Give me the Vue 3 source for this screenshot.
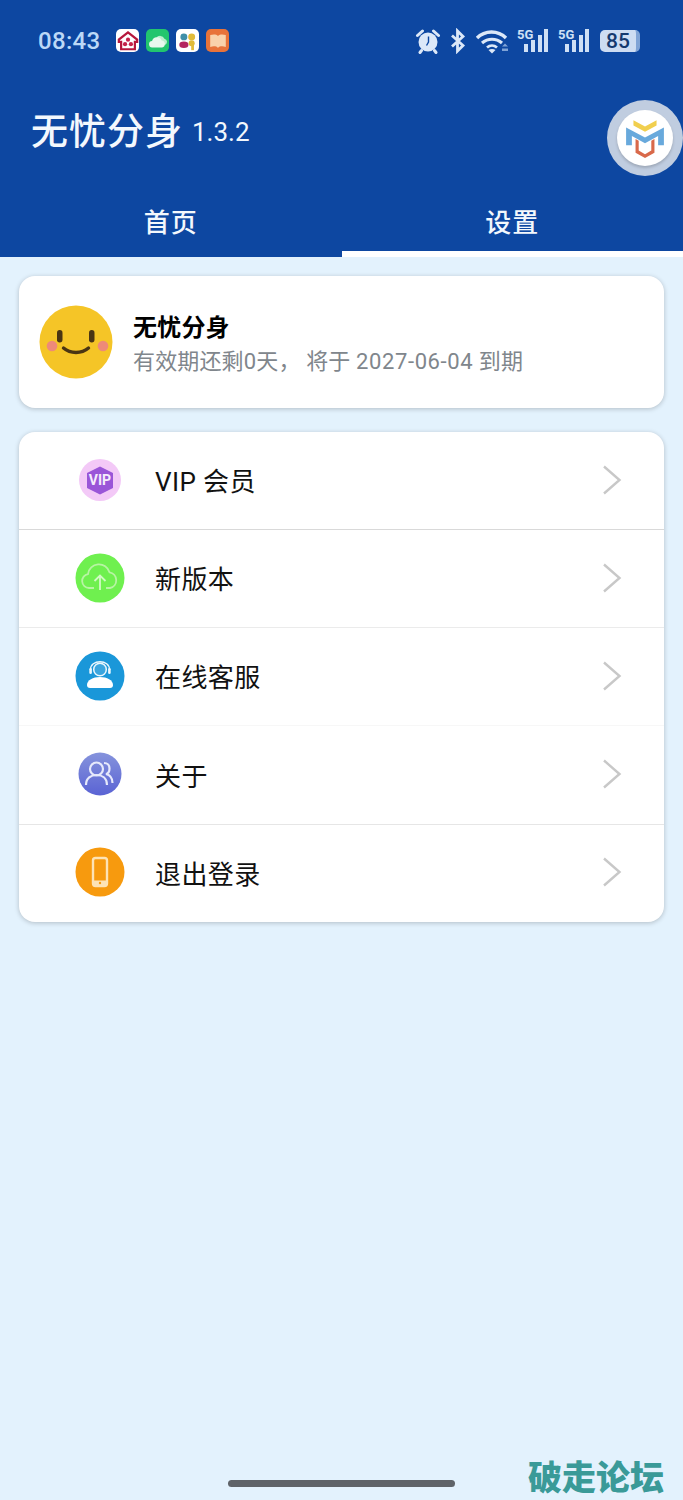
<template>
  <div class="page">
    <header class="appbar">
      <div class="status">
        <span class="time">08:43</span>
        <div class="notif">
          <span class="nicon white">
            <svg viewBox="0 0 24 24" width="22" height="22"><path d="M12 2.500 2 10.500v2.500h2.500v8h15v-8H22v-2.500z" fill="none" stroke="#b5173c" stroke-width="2.400"/><circle cx="12" cy="10.500" r="2.300" fill="#c4224a"/><circle cx="8.800" cy="15.500" r="2.300" fill="#c4224a"/><circle cx="15.200" cy="15.500" r="2.300" fill="#c4224a"/></svg>
          </span>
          <span class="nicon green">
            <svg viewBox="0 0 24 24" width="22" height="22"><path d="M10 9a5 5 0 0 1 9 .5 3.500 3.500 0 0 1 1 6.500h-3z" fill="#bdeed0"/><path d="M6 19a3.500 3.500 0 0 1-.5-7 5.500 5.500 0 0 1 10.500-.5 3.800 3.800 0 0 1 .5 7.500z" fill="#e8f8ee"/></svg>
          </span>
          <span class="nicon white">
            <svg viewBox="0 0 24 24" width="22" height="22"><circle cx="7.500" cy="7.500" r="3.800" fill="#3f8fa8"/><circle cx="16" cy="7.500" r="3.800" fill="#e0bb3a"/><ellipse cx="7.500" cy="16" rx="5" ry="3.500" fill="#b3245f"/><circle cx="16" cy="14.500" r="3.300" fill="#e0bb3a"/><rect x="15.500" y="15" width="3" height="7" fill="#e0bb3a"/></svg>
          </span>
          <span class="nicon orange">
            <svg viewBox="0 0 24 24" width="22" height="22"><path d="M3.500 5.500c3.500-1 6.500-1 8.500 1 2-2 5-2 8.500-1v13c-3.500-1-6.500-1-8.500 1-2-2-5-2-8.500-1z" fill="#f9d2ab"/></svg>
          </span>
        </div>
        <div class="sys">
          <svg class="alarm" viewBox="0 0 26 26" width="26" height="26">
            <circle cx="13" cy="14" r="9.500" fill="#dce8f8"/>
            <path d="M2.500 7.500 7.500 3M23.500 7.500 18.500 3M6.500 22.500 5 24.500M19.500 22.500 21 24.500" stroke="#dce8f8" stroke-width="3" stroke-linecap="round"/>
            <path d="M13.500 8.500v5.500l-2 3.500" stroke="#0d47a1" stroke-width="1.400" fill="none"/>
          </svg>
          <svg class="bt" viewBox="0 0 18 26" width="18" height="26">
            <path d="M3 7.500 14 17.500 8.500 23V3L14 8.500 3 18.500" fill="none" stroke="#dce8f8" stroke-width="2.800"/>
          </svg>
          <svg class="wifi" viewBox="0 0 34 26" width="34" height="26">
            <path d="M2 10C10 2 23 2 31 10" fill="none" stroke="#dce8f8" stroke-width="3.400"/>
            <path d="M7 15c6-5 14-5 20 0" fill="none" stroke="#dce8f8" stroke-width="3.200"/>
            <path d="M12 19.500c3-2.500 7-2.500 10 0" fill="none" stroke="#dce8f8" stroke-width="2.800"/>
            <path d="M17 25.500l-3.500-3.500c2-1.500 5-1.500 7 0z" fill="#dce8f8"/>
            <path d="M27 18.500l3-3 3 3zM27 20.500h6v2.500h-6z" fill="#7fa3d6"/>
          </svg>
          <svg class="sig" viewBox="0 0 32 26" width="32" height="26">
            <text x="0" y="11" class="fiveg">5G</text>
            <rect x="7" y="16" width="4" height="8" fill="#cfe0f5"/>
            <rect x="14" y="12" width="4" height="12" fill="#cfe0f5"/>
            <rect x="21" y="7" width="4" height="17" fill="#cfe0f5"/>
            <rect x="27" y="1" width="4" height="23" fill="#cfe0f5"/>
          </svg>
          <svg class="sig" viewBox="0 0 32 26" width="32" height="26">
            <text x="0" y="11" class="fiveg">5G</text>
            <rect x="7" y="16" width="4" height="8" fill="#cfe0f5"/>
            <rect x="14" y="12" width="4" height="12" fill="#cfe0f5"/>
            <rect x="21" y="7" width="4" height="17" fill="#cfe0f5"/>
            <rect x="27" y="1" width="4" height="23" fill="#cfe0f5"/>
          </svg>
          <div class="battery"><span>85</span></div>
        </div>
      </div>
      <div class="titlerow">
        <span class="title">无忧分身</span>
        <span class="version">1.3.2</span>
      </div>
      <nav class="tabs">
        <div v-for="(t, i) in tabs" :key="t" class="tab" :class="{ on: i === 1 }">{{ t }}</div>
      </nav>
    </header>

    <div class="floatlogo">
      <div class="logoinner">
        <svg viewBox="0 0 40 40" width="42" height="42">
          <path d="M9 3 20 9 31 3v5L20 14 9 8z" fill="#f1cf4e"/>
          <path d="M2 10 20 19.500 38 10v17h-5.500V18L20 25 7.500 18v9H2z" fill="#68a9dc"/>
          <path d="M11 21v13l9 5 9-5V21l-3 1.700V32l-6 3.500L14 32v-9.300z" fill="#d9694a"/>
        </svg>
      </div>
    </div>

    <main class="content">
      <section class="card profile">
        <svg class="smile" viewBox="0 0 74 74" width="74" height="74">
          <circle cx="37" cy="37" r="36.500" fill="#f5c527"/>
          <circle cx="13" cy="41" r="5.300" fill="#ee8a78"/>
          <circle cx="64" cy="41" r="5.300" fill="#ee8a78"/>
          <rect x="18" y="25" width="5.500" height="12.500" rx="2.700" fill="#4a3513"/>
          <rect x="50" y="25" width="5.500" height="12.500" rx="2.700" fill="#4a3513"/>
          <path d="M24.500 43c7 6 18 6 25 0" fill="none" stroke="#4a3513" stroke-width="3.400" stroke-linecap="round"/>
        </svg>
        <div class="pinfo">
          <div class="pname">无忧分身</div>
          <div class="pdesc">有效期还剩0天， 将于 <span class="date">2027-06-04</span> 到期</div>
        </div>
      </section>

      <section class="card list">
        <div v-for="(row, i) in rows" :key="row.label" class="row" :style="{ borderBottomColor: row.line }">
          <span class="rowicon">
            <svg v-if="i === 0" viewBox="0 0 50 50" width="50" height="50">
              <circle cx="25" cy="25" r="21" fill="#f3c9f7"/>
              <path d="M25 11.500 38 18V33L25 39.500 12 33V18z" fill="#9a55d8"/>
              <text x="25" y="30" class="viptext">VIP</text>
            </svg>
            <svg v-else-if="i === 1" viewBox="0 0 50 50" width="50" height="50">
              <circle cx="25" cy="25" r="24.500" fill="#6ff04f"/>
              <path d="M19 35h-5a7 7 0 0 1-1-13.900 11 11 0 0 1 21.500-1.800A8 8 0 0 1 35 35h-4" fill="none" stroke="#b8f4a4" stroke-width="1.800"/>
              <path d="M25 37V22.500M19.500 28 25 22.500l5.500 5.500" fill="none" stroke="#d2f9c4" stroke-width="1.800"/>
            </svg>
            <svg v-else-if="i === 2" viewBox="0 0 50 50" width="50" height="50">
              <circle cx="25" cy="25" r="24.500" fill="#1a97d9"/>
              <circle cx="25" cy="18.500" r="6.300" fill="#3aa5de" stroke="#eaf6fd" stroke-width="1.500"/>
              <path d="M15.500 19c-.5-11 19.500-11 19 0" fill="none" stroke="#eaf6fd" stroke-width="1.400"/>
              <rect x="14.300" y="17" width="2.600" height="6" rx="1.300" fill="#eaf6fd"/>
              <rect x="33.100" y="17" width="2.600" height="6" rx="1.300" fill="#eaf6fd"/>
              <path d="M12 34c0-5 6-8 13-8s13 3 13 8c0 2-1 3-3 3H15c-2 0-3-1-3-3z" fill="#fff"/>
            </svg>
            <svg v-else-if="i === 3" viewBox="0 0 50 50" width="50" height="50">
              <defs><linearGradient id="ab" x1="0" y1="0" x2="0" y2="1"><stop offset="0" stop-color="#8593dc"/><stop offset="1" stop-color="#5a63d4"/></linearGradient></defs>
              <circle cx="25" cy="25" r="21.500" fill="url(#ab)"/>
              <circle cx="21.500" cy="20" r="6.500" fill="none" stroke="#e6e9fb" stroke-width="2.200"/>
              <path d="M11 36c0-7 5-10 10.500-10S32 29 32 36" fill="none" stroke="#e6e9fb" stroke-width="2.200"/>
              <path d="M29 14c4 0 5.500 3 5.500 5.500 0 3-1.500 5-3.500 5.500 4 1 6.500 4 6.500 9" fill="none" stroke="#e6e9fb" stroke-width="2.200"/>
            </svg>
            <svg v-else viewBox="0 0 50 50" width="50" height="50">
              <circle cx="25" cy="25" r="24.500" fill="#f79a0e"/>
              <rect x="18" y="11" width="14" height="28" rx="2.500" fill="#f79a0e" stroke="#fde3b5" stroke-width="2.400"/>
              <rect x="18" y="33.500" width="14" height="5" fill="#fde3b5"/>
              <circle cx="25" cy="36" r="1.200" fill="#f79a0e"/>
            </svg>
          </span>
          <span class="rowlabel">{{ row.label }}</span>
          <svg class="chev" viewBox="0 0 20 30" width="20" height="30"><path d="M2 1.500 17.500 15 2 28.500" fill="none" stroke="#c8c8c8" stroke-width="2.400"/></svg>
        </div>
      </section>
    </main>

    <div class="homebar"></div>
    <div class="mark">破走论坛</div>
  </div>
</template>

<script setup>
const tabs = ['首页', '设置']

// separators are not equally strong in the screenshot
const rows = [
  { label: 'VIP 会员', line: '#d9d9d9' },
  { label: '新版本', line: '#ebebeb' },
  { label: '在线客服', line: '#f7f7f7' },
  { label: '关于', line: '#e6e6e6' },
  { label: '退出登录', line: 'transparent' },
]
</script>

<style>
html, body {
  margin: 0;
  background: #e3f2fd;
}
</style>

<style scoped>
.page {
  position: relative;
  width: 683px;
  height: 1500px;
  overflow: hidden;
  background: #e3f2fd;
  font-family: Roboto, "Noto Sans CJK SC", sans-serif;
}

.appbar {
  background: #0d47a1;
  height: 257px;
  display: flex;
  flex-direction: column;
}

.status {
  height: 81px;
  box-sizing: border-box;
  padding: 0 43px 0 38px;
  display: flex;
  align-items: center;
  color: #bcd9f7;
}
.time {
  font-family: Roboto, sans-serif;
  font-size: 24px;
  font-weight: 500;
  letter-spacing: 0.3px;
  width: 78px;
}
.notif {
  display: flex;
  gap: 7px;
}
.nicon {
  width: 23px;
  height: 23px;
  border-radius: 5px;
  display: flex;
  align-items: center;
  justify-content: center;
}
.nicon.white { background: #fff; }
.nicon.green { background: #22c56e; }
.nicon.orange { background: #e8733a; }

.sys {
  margin-left: auto;
  display: flex;
  align-items: center;
}
.bt { margin-left: 8px; }
.wifi { margin-left: 8px; }
.sig { margin-left: 8px; }
.sig + .sig { margin-left: 9px; }
.fiveg {
  font-family: Roboto, sans-serif;
  font-size: 13px;
  font-weight: 700;
  fill: #cfe0f5;
}
.battery {
  margin-left: 10px;
  width: 36px;
  height: 22px;
  border-radius: 5px;
  background: #cddcf2;
  border-right: 4px solid #7fa3d6;
  color: #14396f;
  font-family: Roboto, sans-serif;
  font-size: 21px;
  font-weight: 500;
  display: flex;
  align-items: center;
  justify-content: center;
}

.titlerow {
  height: 100px;
  box-sizing: border-box;
  padding: 0 0 4px 31px;
  display: flex;
  align-items: center;
  color: #f3f8fd;
}
.title {
  font-size: 37px;
  font-weight: 500;
  letter-spacing: 1px;
}
.version {
  font-size: 26px;
  margin-left: 9px;
  padding-top: 5px;
}

.tabs {
  flex: 1;
  display: flex;
}
.tab {
  flex: 1;
  display: flex;
  align-items: center;
  justify-content: center;
  padding-top: 8px;
  color: #f3f8fd;
  font-size: 26px;
  font-weight: 500;
  letter-spacing: 1px;
  box-sizing: border-box;
  border-bottom: 6px solid transparent;
}
.tab.on {
  border-bottom-color: #fff;
}

.floatlogo {
  position: absolute;
  left: 607px;
  top: 100px;
  width: 76px;
  height: 76px;
  border-radius: 50%;
  background: #c0cde0;
  display: flex;
  align-items: center;
  justify-content: center;
}
.logoinner {
  width: 56px;
  height: 56px;
  border-radius: 50%;
  background: #fff;
  box-shadow: 0 2px 3px rgba(0, 0, 0, 0.18);
  display: flex;
  align-items: center;
  justify-content: center;
}

.content {
  padding: 19px 19px 0;
  display: flex;
  flex-direction: column;
  gap: 24px;
}
.card {
  background: #fff;
  border-radius: 16px;
  box-shadow: 0 1px 5px rgba(0, 0, 0, 0.22);
}
.profile {
  height: 132px;
  box-sizing: border-box;
  padding-left: 20px;
  display: flex;
  align-items: center;
}
.smile {
  flex: none;
}
.pinfo {
  margin-left: 20px;
  padding-top: 5px;
}
.pname {
  color: #000;
  font-size: 24px;
  font-weight: 700;
  line-height: 33px;
  letter-spacing: 0.2px;
}
.pdesc {
  color: #80868c;
  font-size: 22px;
  line-height: 33px;
  letter-spacing: 0.15px;
}
.date {
  letter-spacing: 0.6px;
}

.row {
  height: 98px;
  box-sizing: border-box;
  display: flex;
  align-items: center;
  padding: 0 42px 2px 56px;
  border-bottom: 1px solid transparent;
}
.row:nth-child(4) {
  height: 99px;
}
.row:last-child {
  height: 97px;
}
.rowicon {
  width: 50px;
  height: 50px;
  flex: none;
}
.rowlabel {
  margin-left: 30px;
  flex: 1;
  font-size: 26px;
  letter-spacing: 0.4px;
  color: #111;
}
.chev {
  flex: none;
}
.viptext {
  font-family: Roboto, sans-serif;
  font-size: 14px;
  font-weight: 700;
  fill: #f6ecfc;
  text-anchor: middle;
}

.homebar {
  position: absolute;
  left: 228px;
  top: 1480px;
  width: 227px;
  height: 7px;
  border-radius: 4px;
  background: #5f6368;
}
.mark {
  position: absolute;
  right: 19px;
  top: 1456px;
  font-size: 34px;
  line-height: 44px;
  font-weight: 900;
  color: #3a9a98;
}
</style>
